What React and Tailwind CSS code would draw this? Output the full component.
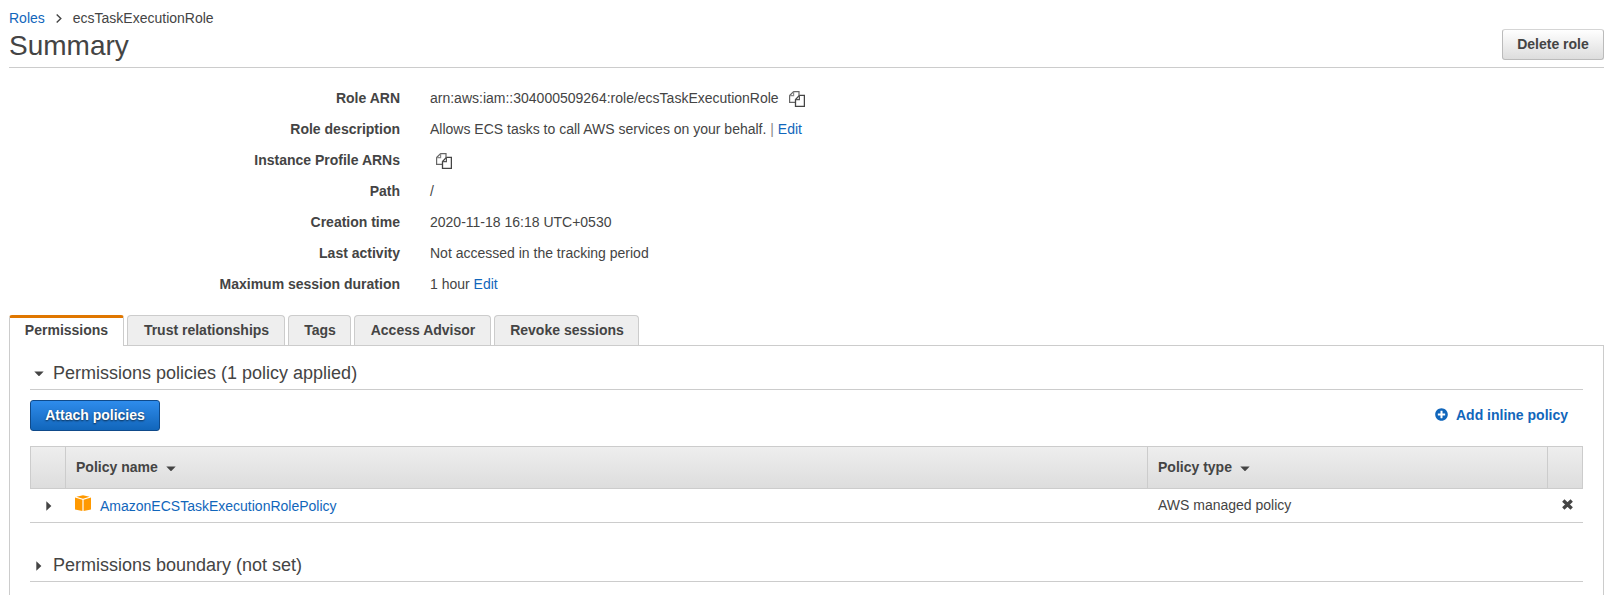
import { FaPlusCircle } from "react-icons/fa";

const CopyIcon = ({ className }) => (
  <svg className={className} width="16" height="16" viewBox="0 0 16 16" fill="none" stroke="#444" strokeWidth="1.2">
    <path d="M6.5 11.4H0.6V4.6L4.6 0.6H10V4.4" stroke="#666" />
    <path d="M4.6 0.6V4.7H0.6" stroke="#888" />
    <path d="M10.4 4.4H15.4V15.4H6.5V8.6L10.4 4.4" strokeWidth="1.3" />
    <path d="M10.4 4.4V8.7H6.5" stroke="#555" />
  </svg>
);

const CaretDown = ({ className }) => (
  <svg className={className} width="10" height="6" viewBox="0 0 10 6">
    <path d="M0.3 0.5H9.7L5.6 4.8Q5 5.4 4.4 4.8Z" fill="#444" />
  </svg>
);

const CaretRight = ({ className }) => (
  <svg className={className} width="6" height="10" viewBox="0 0 6 10">
    <path d="M0.3 0.2V9.8L5.4 5Z" fill="#444" />
  </svg>
);

const PolicyIcon = ({ className }) => (
  <svg className={className} width="16" height="16" viewBox="0 0 16 16" fill="#ff9900">
    <path d="M8 0.2L14.6 1.8L8 3.8L1.4 1.8Z" />
    <path d="M0 2.4L7.4 4.7V16L0 14.4Z" />
    <path d="M16 2.4L8.6 4.7V16L16 14.4Z" />
  </svg>
);

const Link = ({ children }) => <a className="text-[#1166bb]">{children}</a>;

const details = [
  ["Role ARN", <>arn:aws:iam::304000509264:role/ecsTaskExecutionRole<CopyIcon className="ml-[10px] mt-[2px]" /></>],
  ["Role description", <>Allows ECS tasks to call AWS services on your behalf.&nbsp;<span className="text-[#888]">|</span>&nbsp;<Link>Edit</Link></>],
  ["Instance Profile ARNs", <CopyIcon className="ml-[6px] mt-[3px]" />],
  ["Path", "/"],
  ["Creation time", "2020-11-18 16:18 UTC+0530"],
  ["Last activity", "Not accessed in the tracking period"],
  ["Maximum session duration", <>1 hour&nbsp;<Link>Edit</Link></>],
];

const tabs = [
  ["Trust relationships", "w-[158px]"],
  ["Tags", "w-[63px]"],
  ["Access Advisor", "w-[137px]"],
  ["Revoke sessions", "w-[145px]"],
];

export default function App() {
  return (
    <div className="h-[595px] overflow-hidden bg-white pl-[9px] pr-[11px] font-['Liberation_Sans',Arial,sans-serif] text-[14px] leading-5 text-[#444]">
      <header className="flex h-[68px] justify-between border-b border-[#ccc]">
        <div>
          <nav className="flex h-7 items-center pt-2">
            <Link>Roles</Link>
            <svg className="ml-[11px] mr-[11px]" width="6" height="9" viewBox="0 0 6 9" fill="none" stroke="#444" strokeWidth="1.4">
              <path d="M0.7 0.6L4.8 4.5L0.7 8.4" />
            </svg>
            <span>ecsTaskExecutionRole</span>
          </nav>
          <h1 className="text-[28px] leading-9">Summary</h1>
        </div>
        <button className="mt-[29px] h-[31px] w-[102px] rounded-[3px] border border-[#bbb] border-t-[#d5d5d5] bg-linear-to-b from-white to-[#ddd] pb-[1px] font-bold">
          Delete role
        </button>
      </header>

      <dl className="pt-[14px]">
        {details.map(([label, value]) => (
          <div key={label} className="flex h-[31px] items-center">
            <dt className="w-[391px] text-right font-bold">{label}</dt>
            <dd className="ml-[30px] flex items-center whitespace-nowrap">{value}</dd>
          </div>
        ))}
      </dl>

      <div className="mt-[16px] flex h-[30px] gap-[3px] font-bold">
        <div className="-mb-px h-[31px] w-[115px] rounded-t-[3px] border-x border-t-3 border-x-[#ccc] border-t-[#e07700] bg-white pt-[2px] text-center">
          Permissions
        </div>
        {tabs.map(([name, width]) => (
          <div key={name} className={`${width} rounded-t-[4px] border border-b-0 border-[#ccc] bg-[#eee] pl-[1px] pt-[4px] text-center`}>
            {name}
          </div>
        ))}
      </div>

      <main className="h-[260px] border border-b-0 border-[#ccc] pl-[20px] pr-[20px]">
        <h2 className="flex h-[44px] items-center border-b border-[#ccc] pl-[4px] pt-[10px] text-[18px]">
          <CaretDown className="mr-[9px] mt-[3px]" />
          Permissions policies (1 policy applied)
        </h2>
        <div className="mt-[10px] flex items-center justify-between pr-[15px] font-bold">
          <button className="h-[31px] w-[130px] rounded-[3px] border border-[#0f4a8a] bg-linear-to-b from-[#2e8cec] to-[#1166bb] pb-[1px] text-white [text-shadow:0_1px_2px_#000a]">
            Attach policies
          </button>
          <a className="flex items-center pb-[1px] text-[#1166bb]">
            <FaPlusCircle className="mr-[8px] -mt-[2px] size-[13px]" />
            Add inline policy
          </a>
        </div>

        <div className="mt-[15px] grid grid-cols-[35px_1082px_400px_1fr]">
          <div className="contents font-bold *:h-[43px] *:border-y *:border-l *:border-[#ccc] *:bg-linear-to-b *:from-[#eee] *:to-[#ddd]">
            <div />
            <div className="flex items-center pb-[1px] pl-[10px]">Policy name<CaretDown className="ml-[8px] mt-[3px]" /></div>
            <div className="flex items-center pb-[1px] pl-[10px]">Policy type<CaretDown className="ml-[8px] mt-[3px]" /></div>
            <div className="border-r" />
          </div>
          <div className="contents *:h-[34px] *:border-b *:border-[#ccc]">
            <div className="flex items-center pl-[16px]"><CaretRight /></div>
            <div className="flex items-center pl-[10px]">
              <PolicyIcon className="-mt-[5px] mr-[9px]" />
              <Link>AmazonECSTaskExecutionRolePolicy</Link>
            </div>
            <div className="flex items-center pb-[1px] pl-[11px]">AWS managed policy</div>
            <div className="flex items-center pb-[2px] pl-[15px]">
              <svg width="11" height="11" viewBox="0 0 11 11" stroke="#444" strokeWidth="3.4">
                <path d="M1.3 1.6L9.7 9.4M9.7 1.6L1.3 9.4" />
              </svg>
            </div>
          </div>
        </div>

        <h2 className="mt-[25px] flex h-[34px] items-center border-b border-[#ccc] pl-[6px] text-[18px]">
          <CaretRight className="mr-[11px] mt-[2px]" />
          Permissions boundary (not set)
        </h2>
      </main>
    </div>
  );
}
